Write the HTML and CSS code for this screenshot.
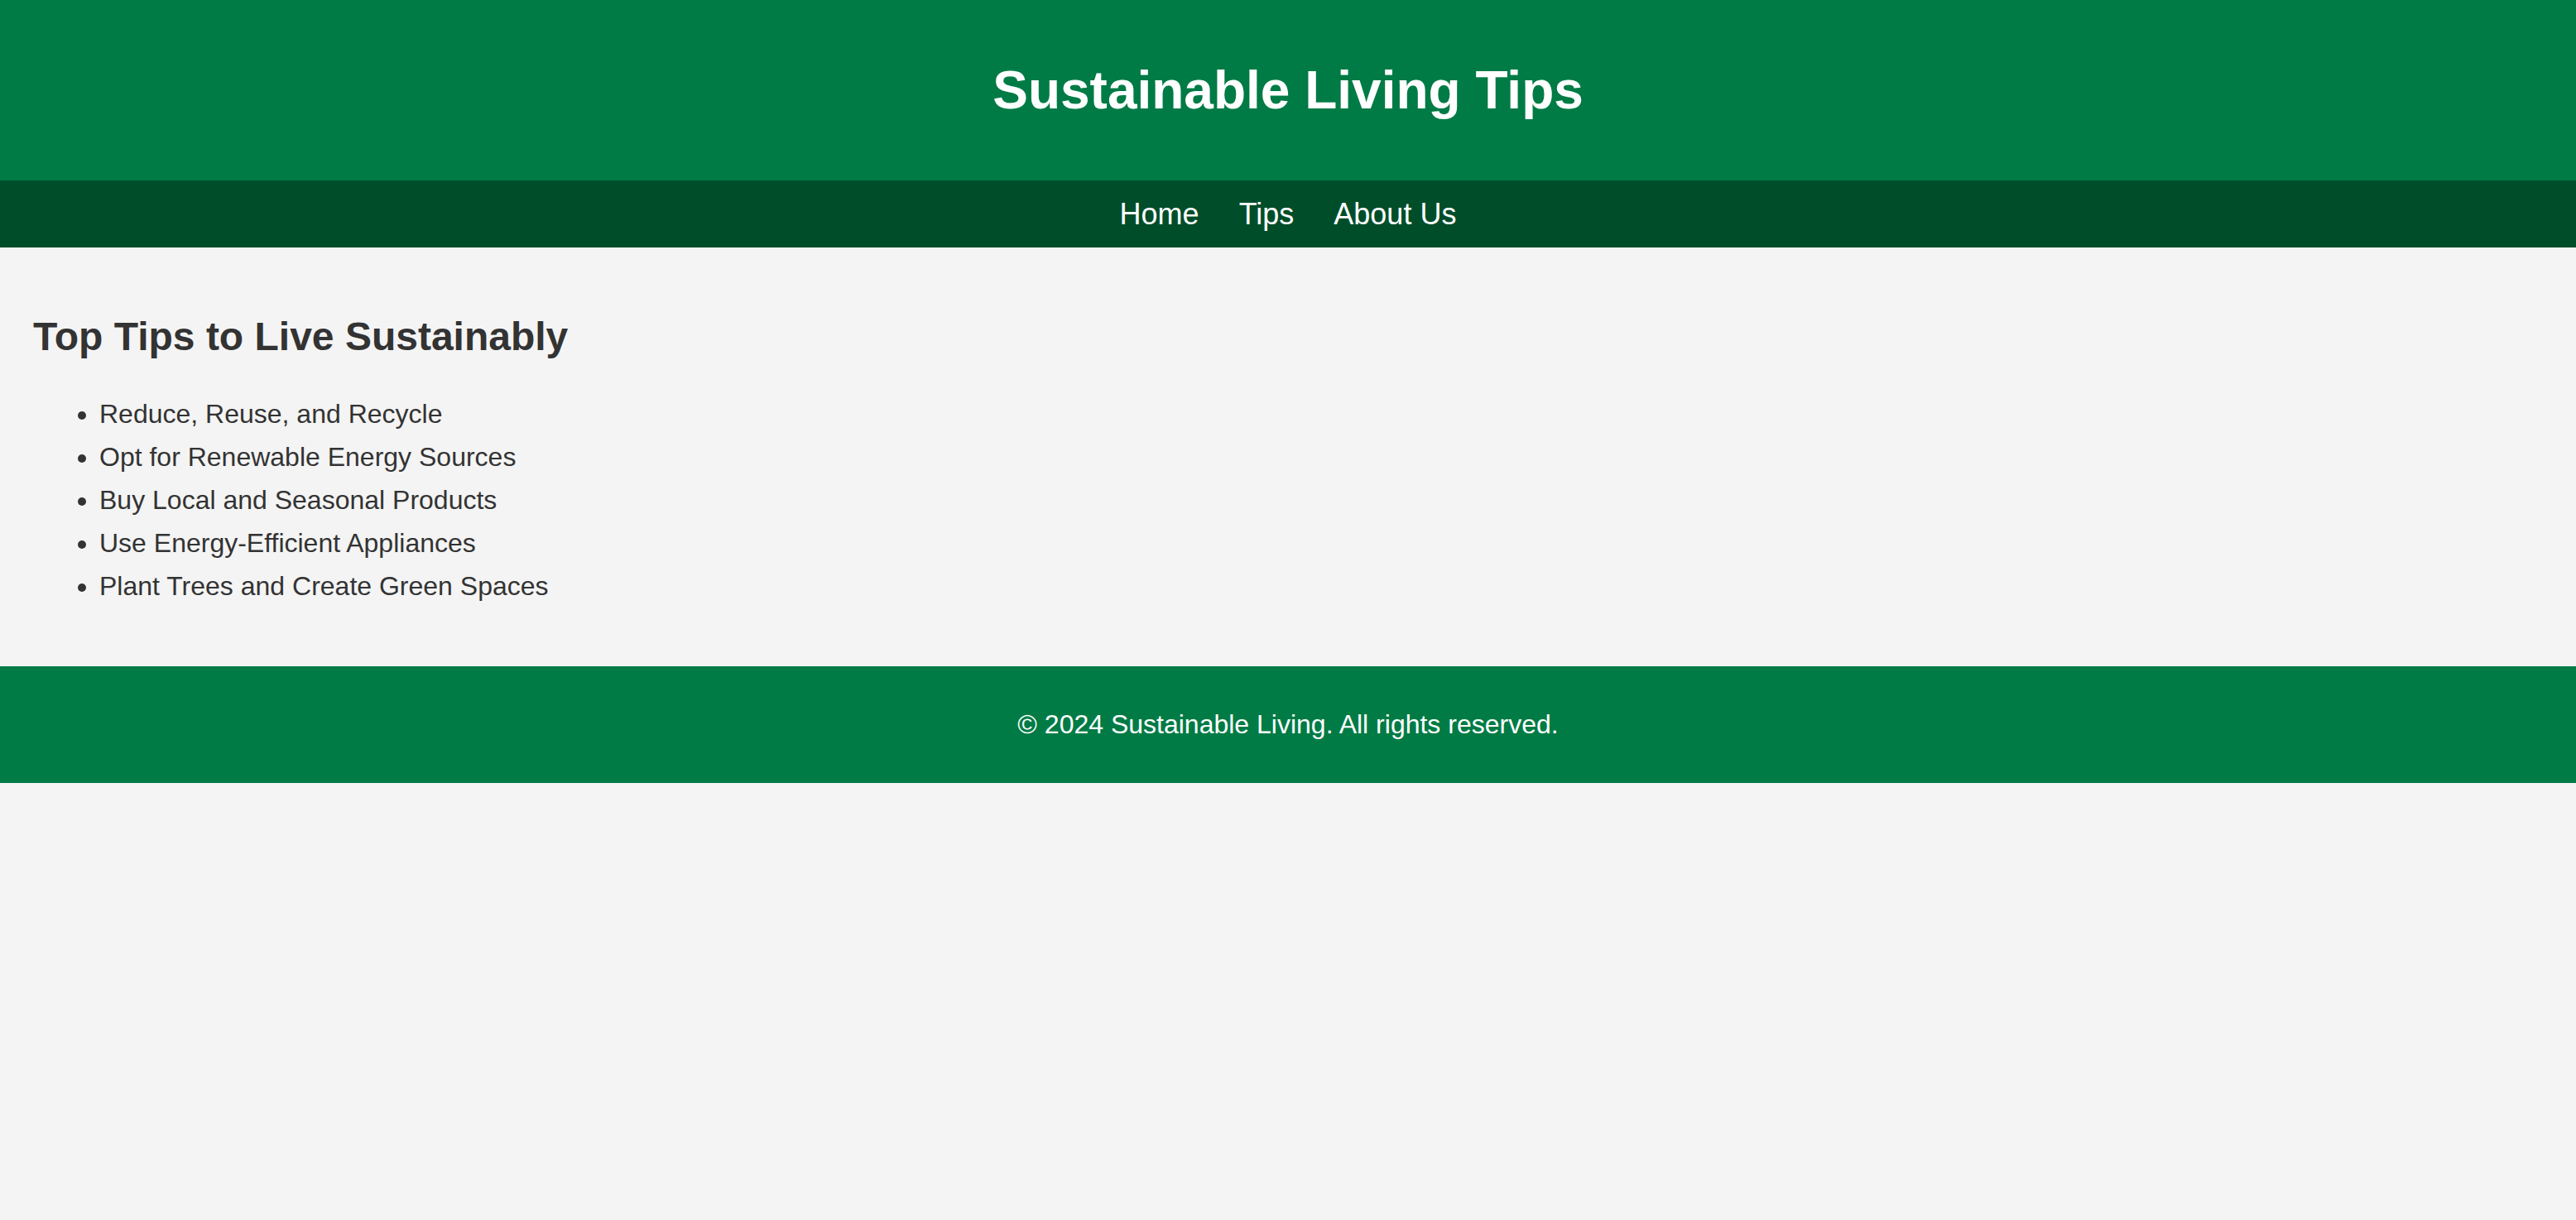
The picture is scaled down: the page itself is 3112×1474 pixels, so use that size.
FILE: index.html
```html
<!DOCTYPE html>
<html lang="en">
<head>
<meta charset="utf-8">
<title>Sustainable Living Tips</title>
<link rel="stylesheet" href="styles.css">
</head>
<body>
<header class="site-header">
  <h1 class="site-title">Sustainable Living Tips</h1>
</header>
<nav class="site-nav">
  <a href="#" class="nav-link">Home</a>
  <a href="#" class="nav-link">Tips</a>
  <a href="#" class="nav-link">About Us</a>
</nav>
<main class="content">
  <h2 class="section-title">Top Tips to Live Sustainably</h2>
  <ul class="tip-list">
    <li>Reduce, Reuse, and Recycle</li>
    <li>Opt for Renewable Energy Sources</li>
    <li>Buy Local and Seasonal Products</li>
    <li>Use Energy-Efficient Appliances</li>
    <li>Plant Trees and Create Green Spaces</li>
  </ul>
</main>
<footer class="site-footer">
  <p class="footer-text">&copy; 2024 Sustainable Living. All rights reserved.</p>
</footer>
</body>
</html>
```
FILE: styles.css
```css
html, body {
  margin: 0;
  padding: 0;
}
body {
  background: #f4f4f4;
  color: #333333;
  font-family: "Liberation Sans", Arial, sans-serif;
  font-size: 32px;
}
.site-header {
  background: #007b45;
  color: #ffffff;
  text-align: center;
  padding: 72px 0;
}
.site-title {
  margin: 0;
  font-size: 64px;
  line-height: 74px;
  font-weight: bold;
}
.site-nav {
  background: #004d2a;
  display: flex;
  justify-content: center;
  padding: 20px 0;
}
.nav-link {
  color: #ffffff;
  text-decoration: none;
  font-size: 36px;
  line-height: 41px;
  margin: 0 24px;
}
.content {
  padding: 40px;
}
.section-title {
  margin: 39.5px 0 40.5px;
  font-size: 48px;
  line-height: 55px;
  font-weight: bold;
}
.tip-list {
  margin: 32px 0 31px;
  padding-left: 80px;
}
.tip-list li {
  line-height: 52.1px;
}
.site-footer {
  background: #007b45;
  color: #ffffff;
  text-align: center;
  padding: 20px 0;
}
.footer-text {
  margin: 32px 0;
  line-height: 36.8px;
}
```
